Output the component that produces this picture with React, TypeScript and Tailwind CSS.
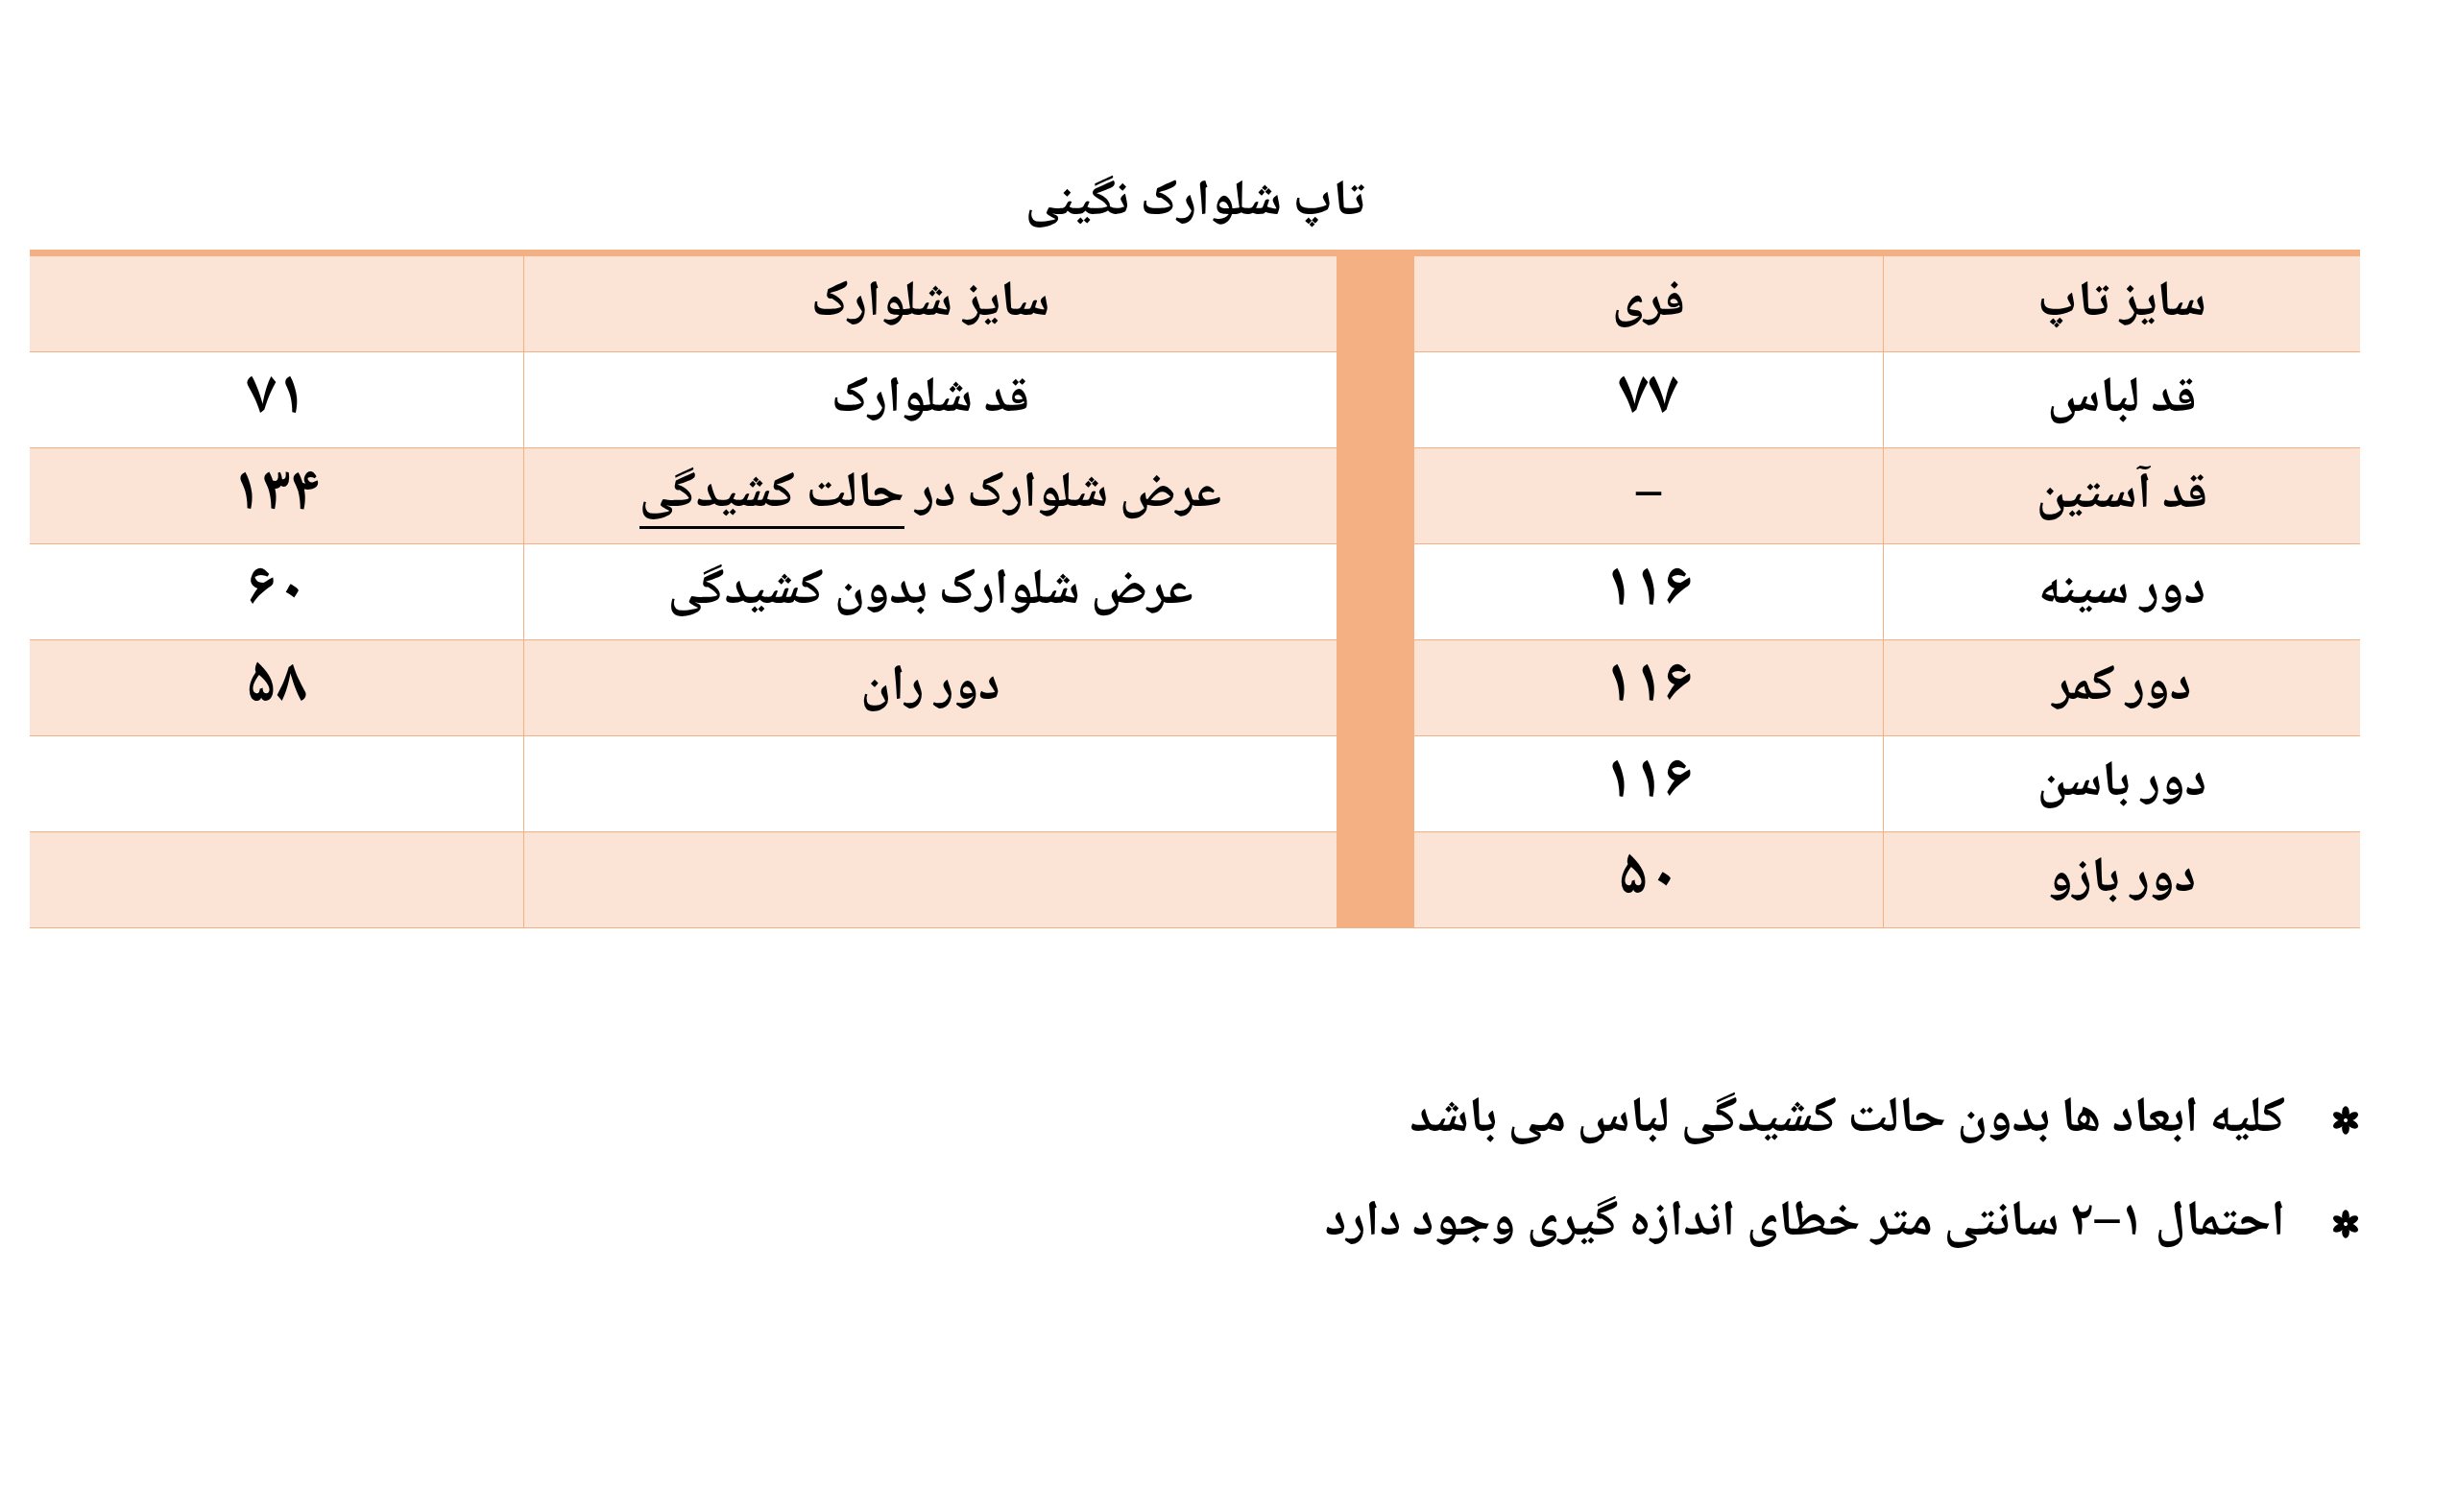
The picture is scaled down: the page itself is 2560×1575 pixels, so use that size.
const FONT = '"Noto Naskh Arabic", "Noto Sans Arabic", "DejaVu Sans", sans-serif';

type Row = {
  label: string;
  free: string;
  pantLabel: React.ReactNode;
  pantValue: string;
};

const rows: Row[] = [
  { label: "قد لباس", free: "۷۷", pantLabel: "قد شلوارک", pantValue: "۷۱" },
  {
    label: "قد آستین",
    free: "–",
    pantLabel: (
      <span>
        عرض شلوارک در{" "}
        <span className="inline-block border-b-[3px] border-black leading-[1.25]">
          حالت کشیدگی
        </span>
      </span>
    ),
    pantValue: "۱۳۴",
  },
  { label: "دور سینه", free: "۱۱۶", pantLabel: "عرض شلوارک بدون کشیدگی", pantValue: "۶۰" },
  { label: "دور کمر", free: "۱۱۶", pantLabel: "دور ران", pantValue: "۵۸" },
  { label: "دور باسن", free: "۱۱۶", pantLabel: "", pantValue: "" },
  { label: "دور بازو", free: "۵۰", pantLabel: "", pantValue: "" },
];

function Star() {
  return (
    <svg width="30" height="30" viewBox="0 0 28 28" className="shrink-0">
      {[0, 60, 120, 180, 240, 300].map((a) => (
        <ellipse
          key={a}
          cx="14"
          cy="6.5"
          rx="3.6"
          ry="6.2"
          fill="#000"
          transform={`rotate(${a} 14 14)`}
        />
      ))}
      <circle cx="14" cy="14" r="1.8" fill="#fff" />
    </svg>
  );
}

function Cell({
  children,
  peach,
  side,
  num,
}: {
  children?: React.ReactNode;
  peach: boolean;
  side?: boolean;
  num?: boolean;
}) {
  return (
    <div
      className={`flex h-[100px] items-center justify-center border-b border-[#f4b083] font-bold leading-none text-black ${
        num ? "text-[64px]" : "text-[52px]"
      } ${peach ? "bg-[#fbe4d5]" : "bg-white"} ${side ? "border-l" : ""}`}
    >
      {children}
    </div>
  );
}

export default function App() {
  return (
    <div className="min-h-[1575px] w-[2560px] bg-white pl-[31px] pt-[176px]" style={{ fontFamily: FONT }}>
      <div className="w-[2427px]" dir="rtl">
        {/* Title */}
        <h1 className="mb-[12px] h-[72px] text-center text-[52px] font-bold leading-[72px] text-black">
          تاپ شلوارک نگینی
        </h1>

        {/* Table */}
        <div className="border-t-[7px] border-[#f4b083]">
          <div className="grid grid-cols-[497px_488px_81px_847px_514px]">
            <Cell peach side>
              سایز تاپ
            </Cell>
            <Cell peach>فری</Cell>
            <div className="bg-[#f4b083]" />
            <Cell peach side>
              سایز شلوارک
            </Cell>
            <Cell peach />
            {rows.map((r, i) => {
              const peach = i % 2 === 1;
              return (
                <div key={i} className="contents">
                  <Cell peach={peach} side>
                    {r.label}
                  </Cell>
                  <Cell peach={peach} num={r.free !== "–"}>
                    {r.free}
                  </Cell>
                  <div className="bg-[#f4b083]" />
                  <Cell peach={peach} side>
                    {r.pantLabel}
                  </Cell>
                  <Cell peach={peach} num>
                    {r.pantValue}
                  </Cell>
                </div>
              );
            })}
          </div>
        </div>

        {/* Notes */}
        <div className="mt-[164px] flex flex-col gap-[36px] text-[52px] font-bold leading-[72px] text-black">
          <div className="flex items-center gap-[48px]">
            <Star />
            <span>کلیه ابعاد ها بدون حالت کشیدگی لباس می باشد</span>
          </div>
          <div className="flex items-center gap-[48px]">
            <Star />
            <span>احتمال ۱–۲ سانتی متر خطای اندازه گیری وجود دارد</span>
          </div>
        </div>
      </div>
    </div>
  );
}
